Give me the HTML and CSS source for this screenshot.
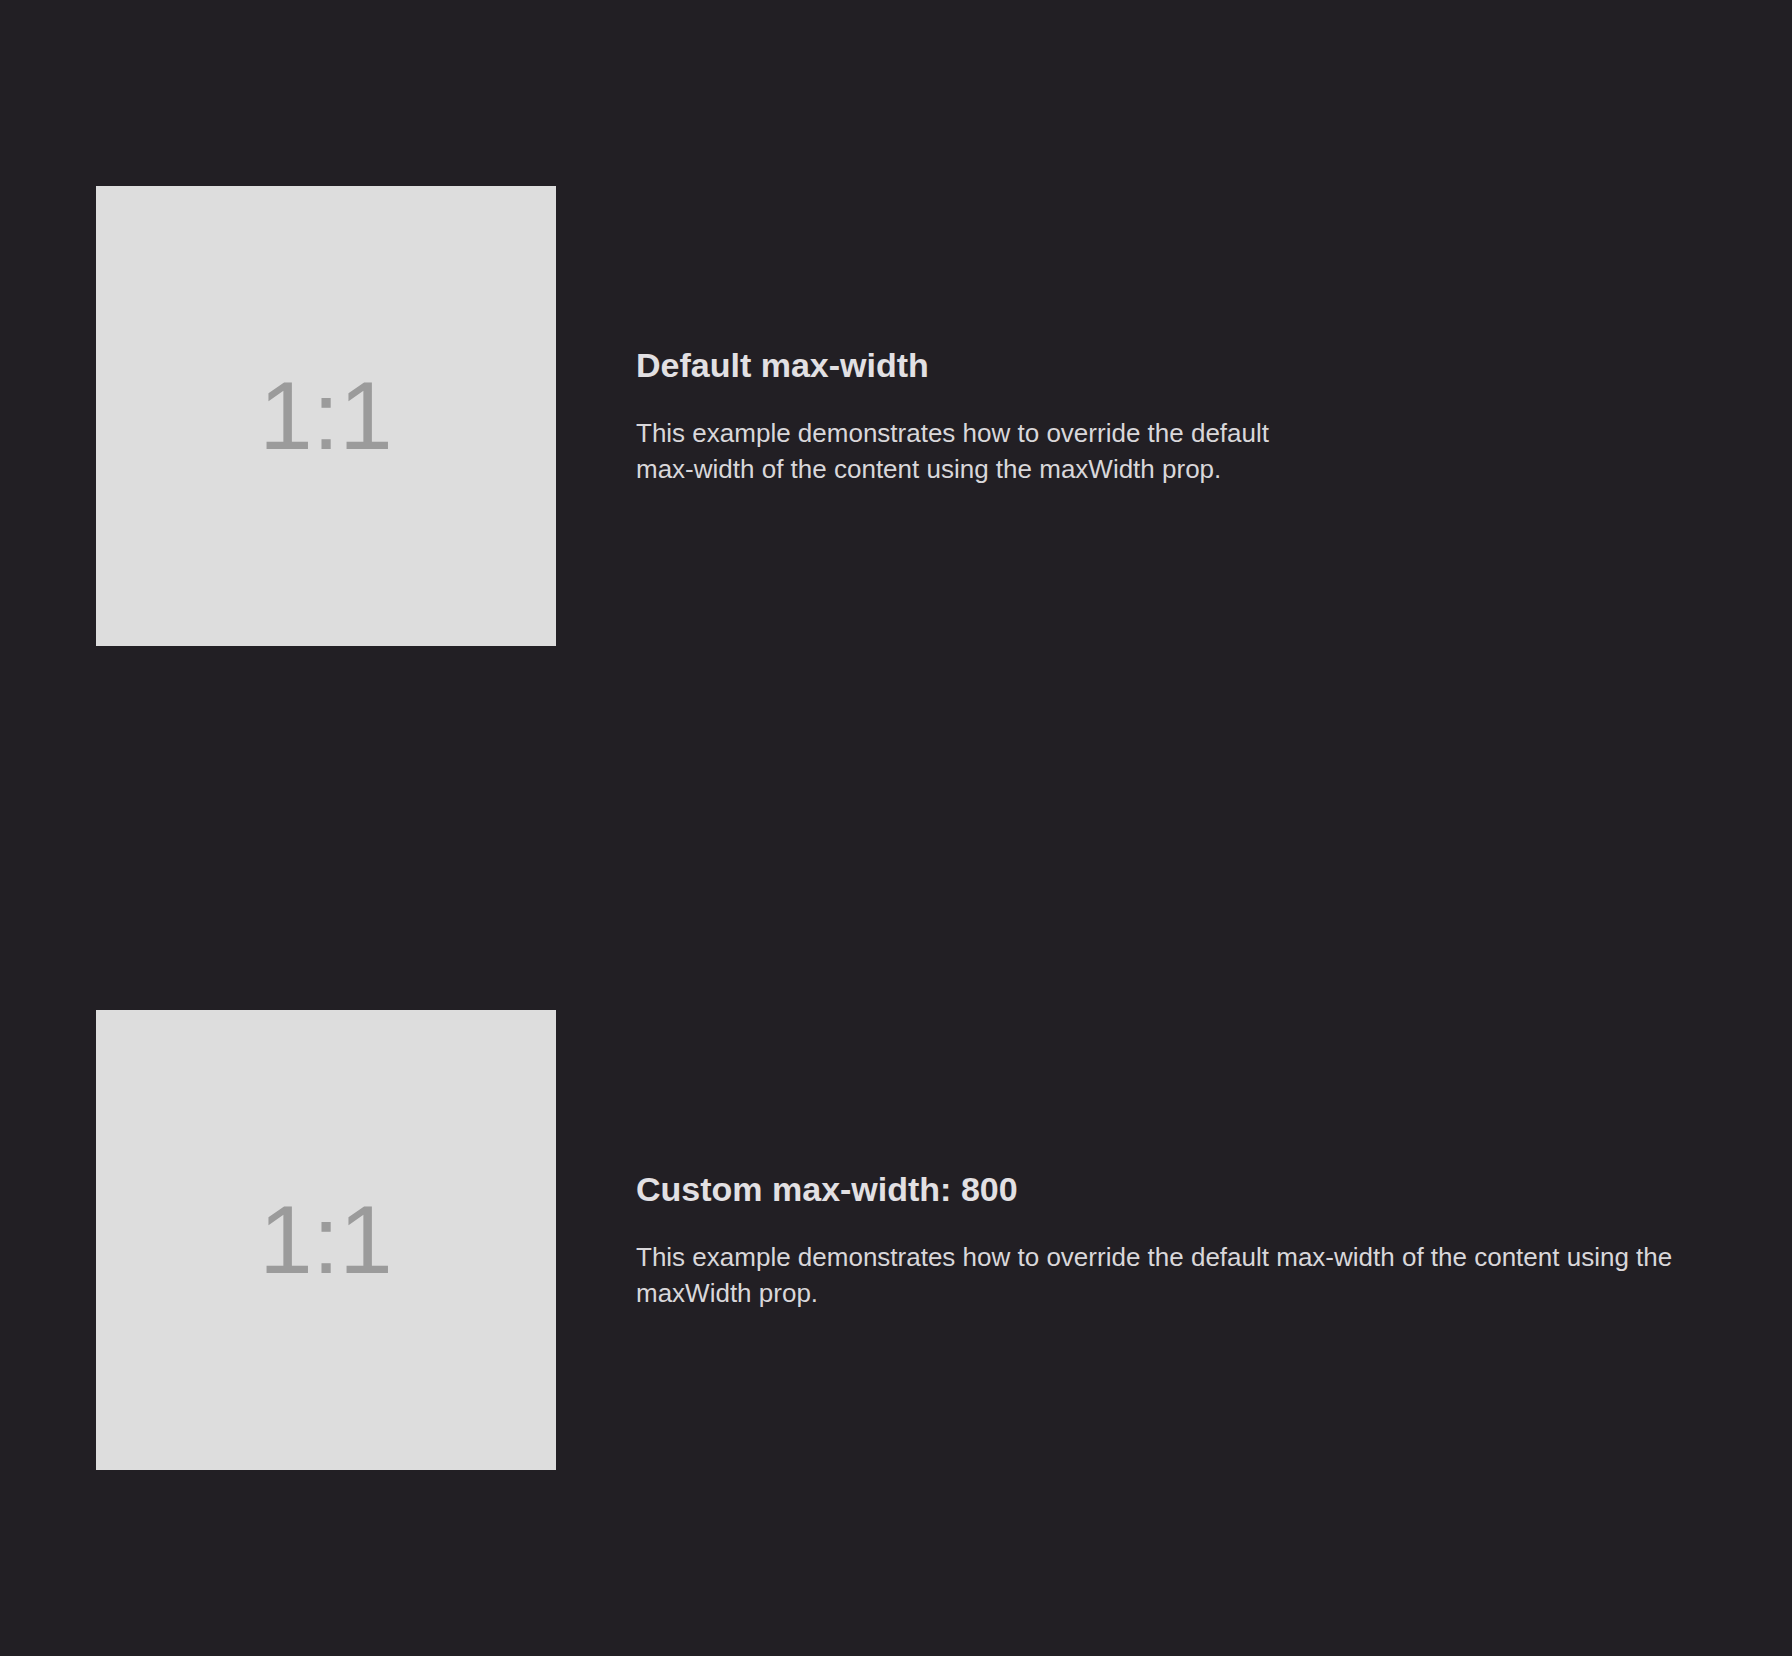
FILE: index.html
```html
<!DOCTYPE html>
<html lang="en">
<head>
<meta charset="utf-8">
<title>Max-width examples</title>
<link rel="stylesheet" href="styles.css">
</head>
<body>
<main class="page">
  <section class="example">
    <div class="ratio-box"><span class="ratio-label">1:1</span></div>
    <div class="content content-default">
      <h2 class="title">Default max-width</h2>
      <p class="text">This example demonstrates how to override the default max-width of the content using the maxWidth prop.</p>
    </div>
  </section>
  <section class="example">
    <div class="ratio-box"><span class="ratio-label">1:1</span></div>
    <div class="content content-custom">
      <h2 class="title">Custom max-width: 800</h2>
      <p class="text">This example demonstrates how to override the default max-width of the content using the maxWidth prop.</p>
    </div>
  </section>
</main>
</body>
</html>
```

FILE: styles.css
```css
html, body {
  margin: 0;
  padding: 0;
  background: #221f24;
}

body {
  font-family: "Liberation Sans", Arial, sans-serif;
}

.page {
  display: flex;
  flex-direction: column;
  gap: 364px;
  padding: 186px 96px;
}

.example {
  display: flex;
  align-items: center;
  gap: 80px;
}

.ratio-box {
  flex: 0 0 460px;
  width: 460px;
  height: 460px;
  background: #dddddd;
  display: flex;
  align-items: center;
  justify-content: center;
}

.ratio-label {
  font-size: 96px;
  line-height: 1;
  color: #9b9b9b;
}

.content {
  flex: 1 1 auto;
}

.content-default {
  max-width: 672px;
}

.content-custom {
  max-width: 1120px;
}

.title {
  margin: 0 0 30px;
  font-size: 34px;
  line-height: 40px;
  font-weight: 700;
  color: #e2e0e3;
}

.text {
  margin: 0;
  font-size: 26px;
  line-height: 36px;
  color: #d9d7da;
}
```
